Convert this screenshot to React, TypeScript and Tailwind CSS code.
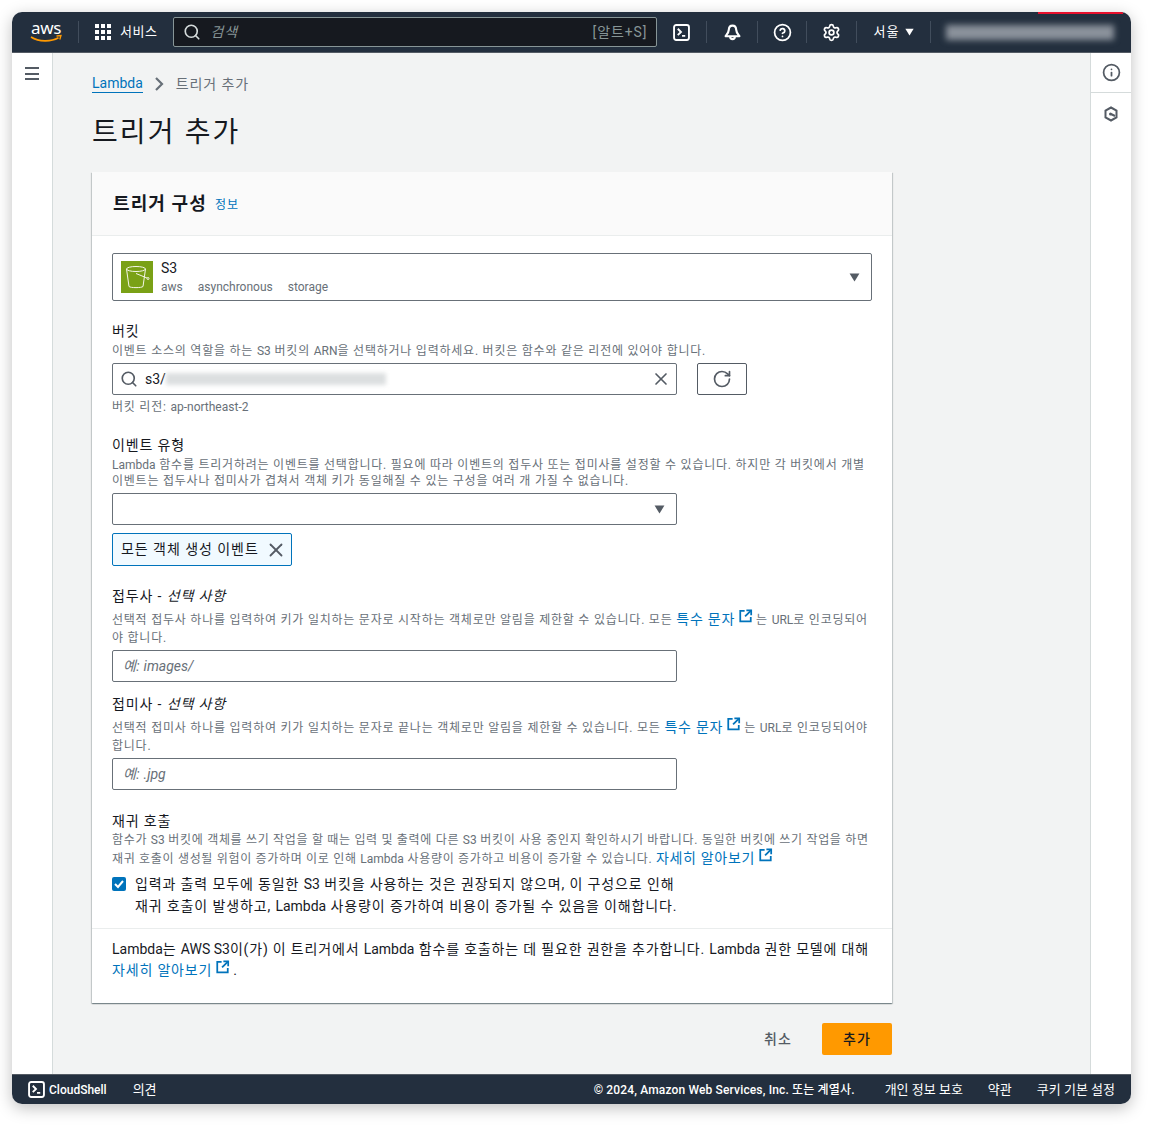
import { ReactNode } from "react";
import { Info, RotateCw, Search, Settings, CircleHelp, X } from "lucide-react";

const FONT = "font-['Roboto','Noto_Sans_CJK_KR',sans-serif]";

// hangul in the reference runs wider than Noto's, the root gets tracking and latin bits opt out
function L({ children }: { children: ReactNode }) {
  return <span className="tracking-normal">{children}</span>;
}

function ExternalIcon() {
  return (
    <svg viewBox="0 0 16 16" className="relative top-[-3px] inline-block w-[15px] h-[14px] mx-[3px] align-[-2px]" fill="none" stroke="#0073bb" strokeWidth="2">
      <path d="M7 2H2v12h12V9" />
      <path d="M9 1.5h5.5V7" />
      <path d="M14.5 1.5 7.5 8.5" />
    </svg>
  );
}

function MoreLink({ size }: { size?: string }) {
  return (
    <span className="whitespace-nowrap">
      <span className={`${size ?? ""} text-[#0073bb]`}>자세히 알아보기</span>
      <ExternalIcon />
    </span>
  );
}

function TerminalIcon({ className }: { className: string }) {
  return (
    <svg viewBox="0 0 16 16" className={className} fill="none" stroke="white" strokeWidth="1.8">
      <rect x="1" y="1" width="14" height="14" rx="2" />
      <path d="m4.5 4.5 3 3-3 3" />
      <path d="M8.5 11.2h3" />
    </svg>
  );
}

function BellIcon() {
  return (
    <svg viewBox="0 0 16 16" className="w-[17px] h-[17px]" fill="none" stroke="white" strokeWidth="2">
      <path d="M8 1.5c-2.4 0-3.4 2-3.5 4-.1 2.5-1.500 4-3 6h13c-1.500-2-2.900-3.500-3-6-.1-2-1.100-4-3.500-4z" strokeLinejoin="round" />
      <path d="M5.800 12a2.200 2.200 0 0 0 4.400 0" />
    </svg>
  );
}

function Caret({ className }: { className: string }) {
  return (
    <svg viewBox="0 0 12 10" className={className} fill="#545b64">
      <path d="M0.500 0.500h11L6 9.500z" />
    </svg>
  );
}

function Divider() {
  return <div className="w-px h-[22px] bg-[#414d5c]" />;
}

function Label({ children }: { children: ReactNode }) {
  return <div className="text-[14px] leading-[18px] text-[#16191f]">{children}</div>;
}

function Hint({ children, tall }: { children: ReactNode; tall?: boolean }) {
  return <div className={`text-[12px] tracking-[0.77px] text-[#687078] ${tall ? "leading-[18px]" : "leading-[16px]"}`}>{children}</div>;
}

function TextBox({ placeholder }: { placeholder: ReactNode }) {
  return (
    <div className="mt-[3px] w-[565px] h-[32px] flex items-center px-[10px] bg-white border border-[#687078] rounded-[2px] text-[14px] tracking-[0.3px] italic text-[#687078]">
      <span>{placeholder}</span>
    </div>
  );
}

function AwsLogo() {
  return (
    <svg viewBox="0 0 33 23" className="w-[33px] h-[23px]">
      <text x="1" y="13" fill="white" fontSize="17" fontFamily="Noto Sans" letterSpacing="-0.3">aws</text>
      <path d="M1 16c8 5 20 5 27.500.8" fill="none" stroke="#ff9900" strokeWidth="1.6" />
      <path d="m26.500 15 4.500-.5-1.200 4" fill="none" stroke="#ff9900" strokeWidth="1.3" />
    </svg>
  );
}

function ServiceGrid() {
  return (
    <div className="grid grid-cols-3 gap-[2px]">
      {[0, 1, 2, 3, 4, 5, 6, 7, 8].map((i) => (
        <div key={i} className="w-[4px] h-[4px] bg-white" />
      ))}
    </div>
  );
}

function Header() {
  return (
    <header className="relative h-[41px] shrink-0 bg-[#232f3e] border-b border-[#545b64] flex items-center text-white">
      <div className="absolute top-0 right-[8px] w-[85px] h-[2px] bg-[#e8112d]" />
      <div className="w-[66px] flex justify-end pr-[15px]"><AwsLogo /></div>
      <Divider />
      <div className="ml-[16px]"><ServiceGrid /></div>
      <span className="ml-[9px] text-[13px] tracking-[0.5px] whitespace-nowrap">서비스</span>
      <div className="ml-[16px] w-[484px] h-[30px] flex items-center bg-[#16191f] border border-[#879596] rounded-[2px]">
        <Search size={18} strokeWidth={2.2} className="ml-[9px] text-[#d5dbdb]" />
        <i className="ml-[9px] text-[14px] tracking-[1.1px] text-[#879596] flex-1">검색</i>
        <span className="mr-[9px] text-[14px] tracking-[0.9px] text-[#879596]">[알트+S]</span>
      </div>
      <div className="w-[49px] flex justify-center"><TerminalIcon className="w-[17px] h-[17px]" /></div>
      <Divider />
      <div className="w-[50px] flex justify-center"><BellIcon /></div>
      <Divider />
      <div className="w-[48px] flex justify-center"><CircleHelp size={19} strokeWidth={2.2} /></div>
      <Divider />
      <div className="w-[49px] flex justify-center"><Settings size={19} strokeWidth={2.2} /></div>
      <Divider />
      <div className="w-[73px] flex items-center justify-center gap-[6px] text-[13px] tracking-[1px]">
        서울
        <svg viewBox="0 0 12 10" className="w-[9px] h-[8px]" fill="white"><path d="M0.500 0.500h11L6 9.500z" /></svg>
      </div>
      <Divider />
      <div className="ml-[15px] w-[168px] h-[15px] bg-[#8b929b] blur-[3px]" />
    </header>
  );
}

function CardHeader() {
  return (
    <div className="h-[64px] px-[21px] flex items-center bg-[#fafafa] border-b border-[#eaeded]">
      <h2 className="text-[18px] tracking-[1.1px] font-bold text-[#16191f]">트리거 구성</h2>
      <span className="ml-[8px] mt-[3px] text-[12px] tracking-[1.1px] text-[#0073bb]">정보</span>
    </div>
  );
}

function TriggerSelect() {
  return (
    <div className="h-[48px] flex items-center pl-[8px] pr-[11px] bg-white border border-[#687078] rounded-[2px]">
      <div className="w-[32px] h-[32px] bg-[#7aa116] flex items-center justify-center">
        <svg viewBox="0 0 32 32" className="w-[32px] h-[32px]" fill="none" stroke="#f4f6e8" strokeWidth="1">
          <ellipse cx="15" cy="8" rx="9.500" ry="2.500" />
          <path d="M5.500 8 8 25.500c1.500 1.500 12.500 1.500 14 0L24.500 8" />
          <path d="M15 12.500 26 17" />
          <circle cx="27" cy="17.500" r="1" />
        </svg>
      </div>
      <div className="ml-[8px] mt-[1px] flex-1 tracking-normal">
        <div className="text-[14px] leading-[19px] text-[#16191f]">S3</div>
        <div className="flex gap-[15px] text-[12px] leading-[19px] text-[#687078]">
          <span>aws</span>
          <span>asynchronous</span>
          <span>storage</span>
        </div>
      </div>
      <Caret className="w-[11px] h-[9px]" />
    </div>
  );
}

function BucketField() {
  return (
    <div>
      <Label>버킷</Label>
      <div className="mt-[3px]">
        <Hint>이벤트 소스의 역할을 하는 <L>S3</L> 버킷의 <L>ARN</L>을 선택하거나 입력하세요. 버킷은 함수와 같은 리전에 있어야 합니다.</Hint>
      </div>
      <div className="mt-[4px] flex gap-[20px]">
        <div className="w-[565px] h-[32px] flex items-center pl-[7px] pr-[5px] bg-white border border-[#687078] rounded-[2px]">
          <Search size={18} strokeWidth={2.2} className="text-[#545b64]" />
          <span className="ml-[7px] text-[14px] tracking-normal text-[#16191f]">s3/</span>
          <div className="w-[220px] h-[12px] bg-[#dcdfe0] blur-[2px] flex-none" />
          <div className="flex-1" />
          <X size={20} strokeWidth={2} className="text-[#545b64]" />
        </div>
        <div className="w-[50px] h-[32px] flex items-center justify-center bg-white border border-[#545b64] rounded-[2px]">
          <RotateCw size={20} strokeWidth={2} className="text-[#545b64]" />
        </div>
      </div>
      <div className="mt-[4px]"><Hint>버킷 리전: <L>ap-northeast-2</L></Hint></div>
    </div>
  );
}

function EventField() {
  return (
    <div>
      <Label>이벤트 유형</Label>
      <div className="mt-[3px]">
        <Hint>
          <L>Lambda</L> 함수를 트리거하려는 이벤트를 선택합니다. 필요에 따라 이벤트의 접두사 또는 접미사를 설정할 수 있습니다. 하지만 각 버킷에서 개별 이벤트는 접두사나 접미사가 겹쳐서 객체 키가 동일해질 수 있는 구성을 여러 개 가질 수 없습니다.
        </Hint>
      </div>
      <div className="mt-[4px] w-[565px] h-[32px] flex items-center justify-end pr-[11px] bg-white border border-[#687078] rounded-[2px]">
        <Caret className="w-[11px] h-[9px]" />
      </div>
      <div className="mt-[8px] w-[180px] h-[33px] flex items-center pl-[8px] bg-[#f1faff] border border-[#0073bb] rounded-[2px] text-[14px] tracking-[0.95px] text-[#16191f] whitespace-nowrap">
        모든 객체 생성 이벤트
        <X size={22} strokeWidth={2} className="ml-[6px] text-[#545b64]" />
      </div>
    </div>
  );
}

function Footer() {
  return (
    <footer className="h-[30px] shrink-0 bg-[#232f3e] border-t border-[#545b64] flex items-center px-[16px] text-[13px] tracking-normal text-white">
      <TerminalIcon className="w-[17px] h-[17px]" />
      <span className="ml-[4px] text-[12px] font-medium">CloudShell</span>
      <span className="ml-[26px]">의견</span>
      <div className="flex-1" />
      <span className="text-[12px] tracking-[0.15px] font-medium">© 2024, Amazon Web Services, Inc. 또는 계열사.</span>
      <span className="ml-[30px]">개인 정보 보호</span>
      <span className="ml-[25px]">약관</span>
      <span className="ml-[25px]">쿠키 기본 설정</span>
    </footer>
  );
}

export default function App() {
  return (
    <div className={`${FONT} tracking-[0.87px] w-[1154px] h-[1127px] bg-white pt-[12px] pl-[12px]`}>
      <div className="w-[1119px] h-[1092px] flex flex-col overflow-hidden rounded-[10px] bg-white shadow-[0_4px_16px_rgba(0,0,0,0.25)]">
        <Header />
        <div className="flex-1 flex min-h-0">
          <aside className="w-[41px] shrink-0 flex justify-center pt-[14px] border-r border-[#d5dbdb]">
            <div className="w-[14px] h-[13px] flex flex-col justify-between">
              <div className="h-[2px] bg-[#545b64]" />
              <div className="h-[2px] bg-[#545b64]" />
              <div className="h-[2px] bg-[#545b64]" />
            </div>
          </aside>
          <main className="flex-1 bg-[#f2f3f3] pl-[39px] pt-[20px]">
            <nav className="h-[22px] flex items-center text-[14px]">
              <span className="text-[#0073bb] tracking-normal border-b border-[#0073bb] leading-[17px]">Lambda</span>
              <svg viewBox="0 0 10 16" className="ml-[11px] mr-[12px] w-[10px] h-[16px]" fill="none" stroke="#687078" strokeWidth="2.2"><path d="m2 2 6 6-6 6" /></svg>
              <span className="text-[#687078]">트리거 추가</span>
            </nav>
            <h1 className="mt-[18px] h-[40px] text-[28px] tracking-[2.1px] leading-[40px] text-[#16191f]">트리거 추가</h1>
            <section className="mt-[19px] w-[800px] h-[831px] bg-white shadow-[0_1px_1px_0_rgba(0,28,36,0.3),1px_1px_1px_0_rgba(0,28,36,0.15),-1px_1px_1px_0_rgba(0,28,36,0.15)]">
              <CardHeader />
              <div className="px-[20px] pt-[17px]">
                <TriggerSelect />
                <div className="mt-[21px]"><BucketField /></div>
                <div className="mt-[21px]"><EventField /></div>
                <div className="mt-[21px]">
                  <Label>접두사 - <i>선택 사항</i></Label>
                  <div className="mt-[5px]">
                    <Hint tall>
                      선택적 접두사 하나를 입력하여 키가 일치하는 문자로 시작하는 객체로만 알림을 제한할 수 있습니다. 모든 <span className="text-[14px] text-[#0073bb]">특수 문자</span><ExternalIcon />는 <L>URL</L>로 인코딩되어야 합니다.
                    </Hint>
                  </div>
                  <TextBox placeholder={<>예: <L>images/</L></>} />
                </div>
                <div className="mt-[13px]">
                  <Label>접미사 - <i>선택 사항</i></Label>
                  <div className="mt-[5px]">
                    <Hint tall>
                      선택적 접미사 하나를 입력하여 키가 일치하는 문자로 끝나는 객체로만 알림을 제한할 수 있습니다. 모든 <span className="text-[14px] text-[#0073bb]">특수 문자</span><ExternalIcon />는 <L>URL</L>로 인코딩되어야 합니다.
                    </Hint>
                  </div>
                  <TextBox placeholder={<>예: <L>.jpg</L></>} />
                </div>
                <div className="mt-[22px]">
                  <Label>재귀 호출</Label>
                  <div className="mt-[1px] [&>div]:tracking-[0.68px]">
                    <Hint tall>
                      함수가 <L>S3</L> 버킷에 객체를 쓰기 작업을 할 때는 입력 및 출력에 다른 <L>S3</L> 버킷이 사용 중인지 확인하시기 바랍니다. 동일한 버킷에 쓰기 작업을 하면 재귀 호출이 생성될 위험이 증가하며 이로 인해 <L>Lambda</L> 사용량이 증가하고 비용이 증가할 수 있습니다. <MoreLink size="text-[14px]" />
                    </Hint>
                  </div>
                  <div className="mt-[5px] flex gap-[9px]">
                    <div className="mt-[4px] w-[14px] h-[14px] shrink-0 rounded-[2px] bg-[#0073bb] flex items-center justify-center">
                      <svg viewBox="0 0 14 14" className="w-[14px] h-[14px]" fill="none" stroke="white" strokeWidth="2"><path d="m3 7 3 3 5-6" /></svg>
                    </div>
                    <div className="text-[14px] leading-[22px] text-[#16191f] whitespace-nowrap">
                      입력과 출력 모두에 동일한 <L>S3</L> 버킷을 사용하는 것은 권장되지 않으며, 이 구성으로 인해<br />
                      재귀 호출이 발생하고, <L>Lambda</L> 사용량이 증가하여 비용이 증가될 수 있음을 이해합니다.
                    </div>
                  </div>
                </div>
              </div>
              <div className="mt-[11px] pt-[10px] px-[20px] border-t border-[#eaeded] text-[14px] tracking-[0.82px] leading-[21px] text-[#16191f]">
                <L>Lambda</L>는 <L>AWS S3</L>이(가) 이 트리거에서 <L>Lambda</L> 함수를 호출하는 데 필요한 권한을 추가합니다. <L>Lambda</L> 권한 모델에 대해 <MoreLink />.
              </div>
            </section>
            <div className="mt-[20px] w-[800px] flex items-center justify-end">
              <span className="text-[14px] tracking-[1.1px] font-medium text-[#545b64]">취소</span>
              <div className="ml-[30px] w-[70px] h-[32px] flex items-center justify-center bg-[#ff9900] rounded-[2px] text-[14px] tracking-[1.1px] font-medium text-[#16191f]">추가</div>
            </div>
          </main>
          <aside className="w-[41px] shrink-0 border-l border-[#d5dbdb]">
            <div className="h-[40px] flex items-center justify-center border-b border-[#d5dbdb]">
              <Info size={19} strokeWidth={2.2} className="text-[#545b64]" />
            </div>
            <div className="h-[41px] flex items-center justify-center">
              <svg viewBox="0 0 16 16" className="w-[16px] h-[16px]" fill="none" stroke="#545b64" strokeWidth="2">
                <path d="M8 1.500 13.500 4.500v7L8 14.500 2.500 11.500v-7z" />
                <circle cx="7.500" cy="8" r="1.500" fill="#545b64" stroke="none" />
                <path d="m8 8 4 2" />
              </svg>
            </div>
          </aside>
        </div>
        <Footer />
      </div>
    </div>
  );
}
